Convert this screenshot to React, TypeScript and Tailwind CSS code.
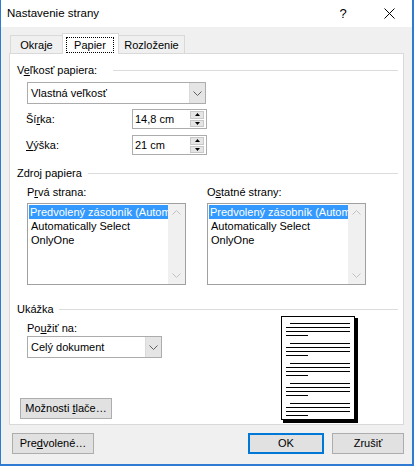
import React from "react";

const Chevron = ({ color = "#606060" }: { color?: string }) => (
  <svg width="9" height="5" viewBox="0 0 9 5">
    <polyline points="0.5,0.5 4.5,4.5 8.5,0.5" fill="none" stroke={color} strokeWidth="1" />
  </svg>
);

const ChevronUp = ({ color = "#c2c2c2" }: { color?: string }) => (
  <svg width="9" height="5" viewBox="0 0 9 5">
    <polyline points="0.5,4.5 4.5,0.5 8.5,4.5" fill="none" stroke={color} strokeWidth="1" />
  </svg>
);

const Select = ({ text, w }: { text: string; w: string }) => (
  <div className={`${w} h-[22px] border border-[#acacac] bg-white flex items-stretch`}>
    <div className="flex-1 flex items-center pl-[3px]">{text}</div>
    <div className="w-[16px] bg-[#e5e5e5] border-l border-[#dadada] flex items-center justify-center">
      <Chevron />
    </div>
  </div>
);

const Spin = ({ value }: { value: string }) => (
  <div className="w-[75px] h-[20px] border border-[#acacac] bg-white flex items-center">
    <div className="flex-1 pl-[2px]">{value}</div>
    <div className="w-[14px] h-[16px] mr-[2px] flex flex-col gap-px">
      <div className="flex-1 bg-[#e5e5e5] border border-[#c8c8c8] flex items-center justify-center">
        <svg width="5" height="3" viewBox="0 0 5 3">
          <polygon points="0,3 2.5,0 5,3" fill="#000" />
        </svg>
      </div>
      <div className="flex-1 bg-[#e5e5e5] border border-[#c8c8c8] flex items-center justify-center">
        <svg width="5" height="3" viewBox="0 0 5 3">
          <polygon points="0,0 2.5,3 5,0" fill="#000" />
        </svg>
      </div>
    </div>
  </div>
);

const ListBox = () => (
  <div className="w-[159px] h-[82px] border border-[#a0a0a0] bg-white flex">
    <div className="flex-1 pt-px pl-px overflow-hidden whitespace-nowrap">
      <div className="h-[14px] bg-[#3399ff] text-white flex items-center pl-px overflow-hidden">
        Predvolený zásobník (Automaticky)
      </div>
      <div className="h-[14px] flex items-center pl-[2px]">Automatically Select</div>
      <div className="h-[14px] flex items-center pl-[2px]">OnlyOne</div>
    </div>
    <div className="w-[17px] bg-[#f0f0f0] flex flex-col justify-between">
      <div className="h-[17px] flex items-center justify-center">
        <ChevronUp />
      </div>
      <div className="h-[17px] flex items-center justify-center">
        <Chevron color="#c2c2c2" />
      </div>
    </div>
  </div>
);

const SectionHeader = ({ children, lineW }: { children: React.ReactNode; lineW: string }) => (
  <div className="h-[14px] flex items-center pl-[7px]">
    <span>{children}</span>
    <div className={`ml-auto mr-[5px] h-px bg-[#dcdcdc] ${lineW}`} />
  </div>
);

const Btn = ({ children, w, primary }: { children: React.ReactNode; w: string; primary?: boolean }) => (
  <div
    className={`${w} h-[21px] bg-[#e1e1e1] flex items-center justify-center ${
      primary ? "border-2 border-[#0078d7]" : "border border-[#adadad]"
    }`}
  >
    <span className="whitespace-pre">{children}</span>
  </div>
);

const PagePreview = () => {
  const groups = [0, 1, 2, 3, 4];
  return (
    <svg width="77" height="107" viewBox="0 0 77 107">
      <rect x="2" y="2" width="75" height="105" fill="#000" />
      <rect x="0.5" y="0.5" width="73" height="103" fill="#fff" stroke="#000" strokeWidth="1" />
      {groups.map((g) => {
        const y = 7 + g * 20;
        return (
          <g key={g} fill="#000">
            <rect x="9" y={y} width="60" height="1" />
            <rect x="5" y={y + 4} width="64" height="1" />
            <rect x="5" y={y + 8} width="64" height="1" />
            <rect x="5" y={y + 12} width="22" height="1" />
          </g>
        );
      })}
    </svg>
  );
};

export default function App() {
  return (
    <div className="w-[414px] h-[466px] bg-[#f0f0f0] border-l border-r-2 border-b-2 border-t-0 border-[#2f7bd4] flex flex-col text-[11px] leading-none text-black overflow-hidden [font-family:'Liberation_Sans',Arial,sans-serif]">
      {/* Title bar */}
      <div className="h-[27px] bg-white flex items-center shrink-0">
        <div className="pl-[6px] text-[11.5px]">Nastavenie strany</div>
        <div className="ml-auto w-[46px] h-full flex items-center justify-center text-[13px]">?</div>
        <div className="w-[46px] h-full flex items-center justify-center">
          <svg width="11" height="11" viewBox="0 0 11 11">
            <line x1="0.5" y1="0.5" x2="10.5" y2="10.5" stroke="#000" strokeWidth="1" />
            <line x1="10.5" y1="0.5" x2="0.5" y2="10.5" stroke="#000" strokeWidth="1" />
          </svg>
        </div>
      </div>

      {/* Tabs */}
      <div className="h-[26px] flex items-end ml-[9px] shrink-0">
        <div className="w-[53px] h-[18px] border border-b-0 border-[#d9d9d9] flex items-center justify-center pt-px">
          Okraje
        </div>
        <div className="relative z-10 -mb-px w-[57px] h-[21px] bg-white border border-b-0 border-[#d9d9d9] -ml-px pt-[3px] pl-[3px]">
          <div className="w-[48px] h-[16px] border border-dotted border-black flex items-center justify-center">
            Papier
          </div>
        </div>
        <div className="w-[66px] h-[18px] border border-b-0 border-l-0 border-[#d9d9d9] flex items-center justify-center pt-px">
          Rozloženie
        </div>
      </div>

      {/* Panel */}
      <div className="ml-[8px] w-[395px] h-[372px] bg-white border border-[#d9d9d9] flex flex-col shrink-0">
        <div className="mt-[9px]">
          <SectionHeader lineW="w-[285px]">
            V<u>e</u>ľkosť papiera:
          </SectionHeader>
        </div>
        <div className="mt-[5px] ml-[17px]">
          <Select text="Vlastná veľkosť" w="w-[179px]" />
        </div>
        <div className="mt-[5px] pl-[16px] flex items-center">
          <div className="w-[106px]">
            Ší<u>r</u>ka:
          </div>
          <Spin value="14,8 cm" />
        </div>
        <div className="mt-[6px] pl-[16px] flex items-center">
          <div className="w-[106px]">
            <u>V</u>ýška:
          </div>
          <Spin value="21 cm" />
        </div>

        <div className="mt-[11px]">
          <SectionHeader lineW="w-[310px]">Zdroj papiera</SectionHeader>
        </div>
        <div className="mt-[5px] pl-[17px] flex">
          <div className="w-[180px]">
            <div className="h-[14px] flex items-center">
              <span>
                P<u>r</u>vá strana:
              </span>
            </div>
            <div className="mt-[4px]">
              <ListBox />
            </div>
          </div>
          <div>
            <div className="h-[14px] flex items-center">
              <span>
                O<u>s</u>tatné strany:
              </span>
            </div>
            <div className="mt-[4px]">
              <ListBox />
            </div>
          </div>
        </div>

        <div className="mt-[17px]">
          <SectionHeader lineW="w-[339px]">Ukážka</SectionHeader>
        </div>
        <div className="flex">
          <div className="w-[271px] flex flex-col">
            <div className="mt-[5px] ml-[17px] h-[14px] flex items-center">
              <span>
                Po<u>u</u>žiť na:
              </span>
            </div>
            <div className="mt-px ml-[17px]">
              <Select text="Celý dokument" w="w-[135px]" />
            </div>
            <div className="mt-[40px] ml-[10px]">
              <Btn w="w-[92px]">
                Možnosti <u>t</u>lače…
              </Btn>
            </div>
          </div>
          <PagePreview />
        </div>
      </div>

      {/* Bottom buttons */}
      <div className="mt-[8px] flex items-center">
        <div className="ml-[11px]">
          <Btn w="w-[82px]">
            Pre<u>d</u>volené…
          </Btn>
        </div>
        <div className="ml-auto flex gap-[8px] mr-[8px]">
          <Btn w="w-[76px]" primary>
            OK
          </Btn>
          <Btn w="w-[72px]">Zrušiť</Btn>
        </div>
      </div>
    </div>
  );
}
